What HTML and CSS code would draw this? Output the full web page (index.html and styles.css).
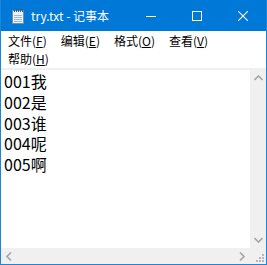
FILE: index.html
```html
<!DOCTYPE html>
<html lang="zh-CN">
<head>
  <meta charset="UTF-8">
  <title>try.txt - 记事本</title>
  <link rel="stylesheet" href="styles.css">
</head>
<body>
  <div class="window">
    <div class="titleBar">
      <svg class="appIcon" width="12" height="15" viewBox="0 0 12 15">
        <rect x="0.5" y="1.5" width="11" height="13" fill="#d4e6f4" stroke="#6d8fb0"/>
        <rect x="1" y="2" width="10" height="12" fill="#e9f2fa"/>
        <line x1="2" y1="6.5" x2="10" y2="6.5" stroke="#9fbad4"/>
        <line x1="2" y1="8.5" x2="10" y2="8.5" stroke="#9fbad4"/>
        <line x1="2" y1="10.5" x2="10" y2="10.5" stroke="#9fbad4"/>
        <line x1="2" y1="12.5" x2="10" y2="12.5" stroke="#9fbad4"/>
        <g fill="#3f5a73">
          <rect x="2" y="0" width="1" height="3"/>
          <rect x="4" y="0" width="1" height="3"/>
          <rect x="6" y="0" width="1" height="3"/>
          <rect x="8" y="0" width="1" height="3"/>
          <rect x="10" y="0" width="1" height="3"/>
        </g>
      </svg>
      <span class="title">try.txt - 记事本</span>
      <div class="captionButtons">
        <div class="captionButton">
          <svg width="10" height="10" viewBox="0 0 10 10"><rect x="0" y="5" width="10" height="1" fill="#fff"/></svg>
        </div>
        <div class="captionButton">
          <svg width="10" height="10" viewBox="0 0 10 10"><rect x="0.5" y="0.5" width="9" height="9" fill="none" stroke="#fff"/></svg>
        </div>
        <div class="captionButton">
          <svg width="10" height="10" viewBox="0 0 10 10"><path d="M0 0 L10 10 M10 0 L0 10" stroke="#fff" stroke-width="1.1"/></svg>
        </div>
      </div>
    </div>

    <div class="menuBar">
      <span class="menuItem">文件(<u>F</u>)</span>
      <span class="menuItem">编辑(<u>E</u>)</span>
      <span class="menuItem">格式(<u>O</u>)</span>
      <span class="menuItem">查看(<u>V</u>)</span>
      <span class="menuItem">帮助(<u>H</u>)</span>
    </div>

    <div class="editor">
      <div class="textArea">001我<br>002是<br>003谁<br>004呢<br>005啊</div>

      <div class="vScroll">
        <div class="scrollButton">
          <svg width="9" height="6" viewBox="0 0 9 6"><polyline points="0.5,5 4.5,1 8.5,5" fill="none" stroke="#a6a6a6" stroke-width="1.6"/></svg>
        </div>
        <div class="scrollButton">
          <svg width="9" height="6" viewBox="0 0 9 6"><polyline points="0.5,1 4.5,5 8.5,1" fill="none" stroke="#a6a6a6" stroke-width="1.6"/></svg>
        </div>
      </div>

      <div class="hScroll">
        <div class="scrollButton">
          <svg width="6" height="9" viewBox="0 0 6 9"><polyline points="5,0.5 1,4.5 5,8.5" fill="none" stroke="#a6a6a6" stroke-width="1.6"/></svg>
        </div>
        <div class="scrollButton">
          <svg width="6" height="9" viewBox="0 0 6 9"><polyline points="1,0.5 5,4.5 1,8.5" fill="none" stroke="#a6a6a6" stroke-width="1.6"/></svg>
        </div>
      </div>

      <div class="sizeGrip">
        <svg width="9" height="9" viewBox="0 0 9 9">
          <g fill="#b8b8b8">
            <rect x="6" y="0" width="2" height="2"/>
            <rect x="3" y="3" width="2" height="2"/>
            <rect x="6" y="3" width="2" height="2"/>
            <rect x="0" y="6" width="2" height="2"/>
            <rect x="3" y="6" width="2" height="2"/>
            <rect x="6" y="6" width="2" height="2"/>
          </g>
        </svg>
      </div>
    </div>
  </div>
</body>
</html>
```

FILE: styles.css
```css
* {
  margin: 0;
  padding: 0;
  box-sizing: border-box;
}

body {
  font-family: "Noto Sans CJK SC", "Noto Sans", sans-serif;
  background-color: #ffffff;
}

.window {
  width: 267px;
  height: 265px;
  border: 1px solid #1b85d8;
  border-top: none;
  display: flex;
  flex-direction: column;
  overflow: hidden;
}

.titleBar {
  height: 31px;
  background-color: #0078d7;
  display: flex;
  align-items: center;
  color: white;
}

.appIcon {
  margin-left: 11px;
  margin-top: 1px;
}

.title {
  margin-left: 7px;
  font-size: 12px;
  line-height: 16px;
  flex: 1;
  white-space: nowrap;
}

.captionButtons {
  display: flex;
  align-self: stretch;
}

.captionButton {
  width: 46px;
  display: flex;
  align-items: center;
  justify-content: center;
  padding-top: 1px;
}

.captionButton svg {
  display: block;
}

.menuBar {
  display: flex;
  flex-wrap: wrap;
  padding-top: 1px;
  font-size: 12px;
  color: #000;
}

.menuItem {
  padding: 0 7px;
  height: 18px;
  line-height: 18px;
  white-space: nowrap;
}

.menuItem u {
  text-underline-offset: 1px;
}

.editor {
  flex: 1;
  border-top: 2px solid #f0f0f0;
  display: grid;
  grid-template-columns: 1fr 16px;
  grid-template-rows: 1fr 16px;
  min-height: 0;
}

.textArea {
  padding: 1px 0 0 3px;
  font-size: 16px;
  line-height: 20.75px;
  color: #000;
  overflow: hidden;
}

.vScroll {
  background-color: #f0f0f0;
  display: flex;
  flex-direction: column;
  justify-content: space-between;
}

.hScroll {
  background-color: #f0f0f0;
  display: flex;
  justify-content: space-between;
}

.scrollButton {
  width: 16px;
  height: 16px;
  display: flex;
  align-items: center;
  justify-content: center;
}

.scrollButton svg {
  display: block;
}

.sizeGrip {
  background-color: #f0f0f0;
  display: flex;
  align-items: flex-end;
  justify-content: flex-end;
  padding: 0 1px 1px 0;
}

.sizeGrip svg {
  display: block;
}
```
